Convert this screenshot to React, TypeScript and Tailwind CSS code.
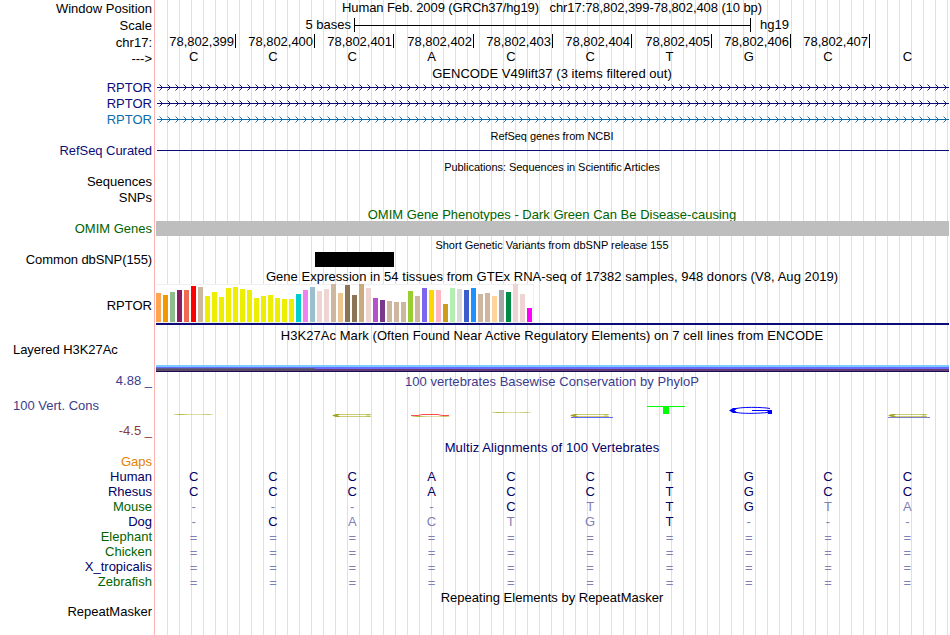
import React from "react";
import clsx from "clsx";

interface RowProps {
  height: number;
  label?: string;
  labelClass?: string;
  children?: React.ReactNode;
}

interface TitleProps {
  text: string;
  small?: boolean;
  className?: string;
}

const BASE_WIDTH = 79.3;
const SEQUENCE = "CCCACCTGCC";
const FIRST_POSITION = 78802399;

const SPECIES = [
  { name: "Human", color: "text-[#000064]", bases: "CCCACCTGCC" },
  { name: "Rhesus", color: "text-[#000064]", bases: "CCCACCTGCC" },
  { name: "Mouse", color: "text-[#006400]", bases: "----CtTGta" },
  { name: "Dog", color: "text-[#000064]", bases: "-CactgT---" },
  { name: "Elephant", color: "text-[#006400]", bases: "==========" },
  { name: "Chicken", color: "text-[#006400]", bases: "==========" },
  { name: "X_tropicalis", color: "text-[#000064]", bases: "==========" },
  { name: "Zebrafish", color: "text-[#006400]", bases: "==========" },
];

// [height, color] per tissue
const TISSUES: [number, string][] = [
  [29, "#ffa54f"],
  [27, "#ee9a00"],
  [30, "#8fbc8f"],
  [32, "#8b1c62"],
  [32, "#ee6a50"],
  [36, "#ff0000"],
  [35, "#cdb79e"],
  [26, "#eeee00"],
  [30, "#eeee00"],
  [25, "#eeee00"],
  [34, "#eeee00"],
  [35, "#eeee00"],
  [33, "#eeee00"],
  [32, "#eeee00"],
  [24, "#eeee00"],
  [26, "#eeee00"],
  [27, "#eeee00"],
  [24, "#eeee00"],
  [23, "#eeee00"],
  [23, "#eeee00"],
  [28, "#00cdcd"],
  [32, "#ee82ee"],
  [35, "#9ac0cd"],
  [31, "#eed5d2"],
  [33, "#eed5d2"],
  [38, "#cdb79e"],
  [29, "#eec591"],
  [37, "#8b7355"],
  [27, "#8b7355"],
  [38, "#cdaa7d"],
  [34, "#eed5d2"],
  [24, "#b452cd"],
  [22, "#7a378b"],
  [21, "#cdb79e"],
  [20, "#cdb79e"],
  [20, "#cdb79e"],
  [31, "#9acd32"],
  [26, "#cdb79e"],
  [34, "#7a67ee"],
  [32, "#ffd700"],
  [32, "#ffb6c1"],
  [18, "#cd9b1d"],
  [34, "#b4eeb4"],
  [33, "#d9d9d9"],
  [32, "#3a5fcd"],
  [34, "#1e90ff"],
  [28, "#cdb79e"],
  [29, "#cdb79e"],
  [26, "#ffd39b"],
  [32, "#a6a6a6"],
  [30, "#008b45"],
  [38, "#eed5d2"],
  [28, "#eed5d2"],
  [14, "#ff00ff"],
];

const Row = ({ height, label, labelClass, children }: RowProps) => (
  <div className="flex" style={{ height }}>
    <div
      className={clsx(
        "flex w-[152px] shrink-0 items-center justify-end whitespace-pre",
        labelClass
      )}
    >
      {label}
    </div>
    <div className="ml-[4px] h-full w-[793px]">{children}</div>
  </div>
);

const Title = ({ text, small, className }: TitleProps) => (
  <div
    className={clsx(
      "flex h-full items-center justify-center pr-px whitespace-pre",
      small && "text-[11px]",
      className
    )}
  >
    {text}
  </div>
);

const Bases = ({ bases, className }: { bases: string; className?: string }) => (
  <div className={clsx("-ml-[2px] grid h-full w-[793px] grid-cols-10", className)}>
    {bases.split("").map((base, i) => (
      <span
        key={i}
        className={clsx(
          "flex items-center justify-center",
          /[-=a-z]/.test(base) && "text-[#8080b4]",
          base === "=" && "pt-[2px]"
        )}
      >
        {base.toUpperCase()}
      </span>
    ))}
  </div>
);

const Positions = () => (
  <div className="ml-px flex h-[14px]">
    {SEQUENCE.slice(0, 9)
      .split("")
      .map((_, i) => {
        const width =
          Math.floor((i + 1) * BASE_WIDTH) - Math.floor(i * BASE_WIDTH);
        return (
          <div
            key={i}
            className="flex shrink-0 items-center justify-end border-r border-black pr-px tracking-[-0.03px]"
            style={{ width }}
          >
            {(FIRST_POSITION + i).toLocaleString("en-US")}
          </div>
        );
      })}
  </div>
);

const Transcript = ({ id, color }: { id: string; color: string }) => (
  <svg width="793" height="16" className="block">
    <defs>
      <pattern id={id} x="2" width="8" height="16" patternUnits="userSpaceOnUse">
        <path
          d="M1.5 4.5 L4.5 7.5 L1.5 10.5"
          fill="none"
          stroke={color}
          strokeWidth="0.95"
        />
      </pattern>
    </defs>
    <rect x="2" width="791" height="16" fill={`url(#${id})`} />
    <rect x="1" y="7" width="792" height="1" fill={color} />
  </svg>
);

const SquashedC = ({ x, y }: { x: number; y: number }) => (
  <g>
    <path
      d={`M${x + 39} ${y + 0.5} H${x + 6} L${x + 1} ${y + 1.5} L${x + 6} ${y + 2.5} H${x + 39}`}
      fill="none"
      stroke="#a0a000"
      strokeOpacity="0.6"
      strokeWidth="0.9"
    />
    <path
      d={`M${x} ${y + 1.5} l4 -1.5 h4 l-2 1.5 l2 1.5 h-4 z`}
      fill="#909000"
      fillOpacity="0.7"
    />
    <rect x={x + 34} y={y} width="4" height="3" fill="#a0a000" fillOpacity="0.3" />
  </g>
);

const ConservationLogo = () => (
  <svg width="793" height="49" viewBox="156 390 793 49" className="block">
    <defs>
      <linearGradient id="thin">
        <stop offset="0" stopColor="#a0a000" stopOpacity="0.3" />
        <stop offset="0.15" stopColor="#a0a000" stopOpacity="0.8" />
        <stop offset="0.4" stopColor="#a0a000" stopOpacity="0.35" />
        <stop offset="0.7" stopColor="#a0a000" stopOpacity="0.35" />
        <stop offset="0.88" stopColor="#a0a000" stopOpacity="0.6" />
        <stop offset="1" stopColor="#a0a000" stopOpacity="0.2" />
      </linearGradient>
    </defs>
    <rect x="174" y="414" width="39" height="1" fill="url(#thin)" />
    <SquashedC x={332} y={414} />
    <path
      d="M411 415.5 H418 L422 414.5 H438 L442 415.5 H449"
      fill="none"
      stroke="#ff2020"
      strokeOpacity="0.8"
    />
    <rect x="412" y="416" width="38" height="1" fill="url(#thin)" />
    <rect x="492" y="412" width="39" height="1" fill="url(#thin)" />
    <SquashedC x={570} y={414} />
    <rect x="571" y="417" width="42" height="1" fill="#0000ff" fillOpacity="0.6" />
    <path d="M647 406 H685 V407 H669 V414 H663 V407 H647 Z" fill="#00ff00" />
    <g fill="none" stroke="#0000ff">
      <path d="M770 408.5 C764 407.2 739 406.4 733 409.5 C729 413 746 414.4 768 412.5" />
      <path d="M752 410.5 H771" />
    </g>
    <path d="M729 410.5 L733 408 H738 L734.5 410.5 L738 413 H733 Z" fill="#0000ff" />
    <path d="M766 410 H772 V414 H768 V412 Z" fill="#0000ff" />
    <SquashedC x={888} y={414} />
    <rect x="888" y="417" width="42" height="1" fill="#0000a0" fillOpacity="0.5" />
  </svg>
);

export default function App() {
  return (
    <div className="relative h-[635px] w-[950px] overflow-hidden bg-white font-['Liberation_Sans',sans-serif] text-[13px] leading-none text-black">
      {/* guide lines behind every track */}
      <div className="absolute top-0 left-[154px] h-full w-px bg-[#ffb4b4]" />
      <div className="absolute top-0 left-[156px] h-full w-[793px] bg-[repeating-linear-gradient(to_right,transparent_0px,transparent_11px,#dcdcff_11px,#dcdcff_12px)]" />

      <div className="relative flex flex-col">
        <Row height={16} label="Window Position">
          <Title
            text="Human Feb. 2009 (GRCh37/hg19)   chr17:78,802,399-78,802,408 (10 bp)"
            className="pb-[2px] tracking-[-0.085px]"
          />
        </Row>
        <Row height={18} label="Scale">
          <div className="flex h-full items-center">
            <span className="w-[195px] pb-px text-right">5 bases</span>
            <div className="ml-[3px] flex h-[14px] w-[397px] items-center border-x border-black">
              <div className="h-px w-full bg-black" />
            </div>
            <span className="ml-[9px] pb-px">hg19</span>
          </div>
        </Row>
        <Row height={16} label="chr17:">
          <Positions />
        </Row>
        <Row height={16} label="--->">
          <Bases bases={SEQUENCE} className="pb-[3px]" />
        </Row>

        <Row height={14}>
          <Title
            text="GENCODE V49lift37 (3 items filtered out)"
            className="tracking-[0.03px]"
          />
        </Row>
        <Row height={16} label="RPTOR" labelClass="pb-[2px] text-[#0c0c78]">
          <Transcript id="transcript-1" color="#0c0c78" />
        </Row>
        <Row height={16} label="RPTOR" labelClass="pb-[2px] text-[#0c0c78]">
          <Transcript id="transcript-2" color="#0c0c78" />
        </Row>
        <Row height={16} label="RPTOR" labelClass="pb-[2px] text-[#0c6caa]">
          <Transcript id="transcript-3" color="#0c6caa" />
        </Row>

        <Row height={16}>
          <Title
            small
            text="RefSeq genes from NCBI"
            className="tracking-[-0.05px]"
          />
        </Row>
        <Row
          height={14}
          label="RefSeq Curated"
          labelClass="pb-[2px] tracking-[-0.05px] text-[#0c0c78]"
        >
          <div className="flex h-[13px] items-center pl-px">
            <div className="h-px w-full bg-[#0c0c78]" />
          </div>
        </Row>

        <Row height={17}>
          <Title
            small
            text="Publications: Sequences in Scientific Articles"
            className="pt-[2px] tracking-[-0.045px]"
          />
        </Row>
        <Row height={15} label="Sequences" labelClass="pb-[2px]" />
        <Row height={16} label="SNPs" labelClass="pb-[2px]" />

        <Row height={15}>
          <Title
            text="OMIM Gene Phenotypes - Dark Green Can Be Disease-causing"
            className="pt-[2px] text-[#006400]"
          />
        </Row>
        <Row height={15} label="OMIM Genes" labelClass="text-[#006400]">
          <div className="h-full bg-[#bebebe]" />
        </Row>

        <Row height={16}>
          <Title
            small
            text="Short Genetic Variants from dbSNP release 155"
            className="pt-[2px]"
          />
        </Row>
        <Row
          height={15}
          label="Common dbSNP(155)"
          labelClass="tracking-[-0.1px]"
        >
          <div className="ml-[159px] h-full w-[79px] bg-black" />
        </Row>

        <Row height={17}>
          <Title
            text="Gene Expression in 54 tissues from GTEx RNA-seq of 17382 samples, 948 donors (V8, Aug 2019)"
            className="pt-[2px] tracking-[0.055px]"
          />
        </Row>
        <Row height={41} label="RPTOR" labelClass="pt-[2px]">
          <div className="flex h-[39px] w-[378px] items-end gap-[2px] border-t border-r border-b border-[#f0f0f0] bg-white">
            {TISSUES.map(([height, color], i) => (
              <div
                key={i}
                className="w-[5px] shrink-0"
                style={{ height, backgroundColor: color }}
              />
            ))}
          </div>
          <div className="h-[2px] bg-[#0c0c78]" />
        </Row>

        <Row height={21}>
          <Title
            text="H3K27Ac Mark (Often Found Near Active Regulatory Elements) on 7 cell lines from ENCODE"
            className="tracking-[0.058px]"
          />
        </Row>
        <div className="flex h-[26px]">
          <span className="w-[156px] shrink-0 pl-[13px] leading-[7px] tracking-[-0.05px]">
            Layered H3K27Ac
          </span>
          <div className="mt-[19px] flex w-[793px] flex-col">
            <div className="h-[2px] bg-[#78ccff]" />
            <div className="h-px bg-[#6a6aff]" />
            <div className="flex h-px">
              <div className="w-[159px] bg-[#5c5c82]" />
              <div className="flex-1 bg-[#6a6aff]" />
            </div>
            <div className="flex h-[2px]">
              <div className="w-[159px] bg-[#5c4c6c]" />
              <div className="flex-1 bg-[#643c78]" />
            </div>
            <div className="h-px bg-[#1c0c50]" />
          </div>
        </div>

        <Row height={18} label="4.88 _" labelClass="pb-px text-[#3c3c8c]">
          <Title
            text="100 vertebrates Basewise Conservation by PhyloP"
            className="tracking-[0.04px] text-[#3c3c8c]"
          />
        </Row>
        <div className="flex h-[49px]">
          <div className="flex w-[152px] shrink-0 flex-col justify-between pt-[9px] pb-[2px]">
            <span className="pl-[13px] text-[#3c3c8c]">100 Vert. Cons</span>
            <span className="text-right text-[#8c3c3c]">-4.5 _</span>
          </div>
          <div className="ml-[4px]">
            <ConservationLogo />
          </div>
        </div>

        <Row height={16}>
          <Title
            text="Multiz Alignments of 100 Vertebrates"
            className="tracking-[0.1px] text-[#000064]"
          />
        </Row>
        <Row height={14} label="Gaps" labelClass="pb-[2px] text-[#e68200]" />
        {SPECIES.map(({ name, color, bases }) => (
          <Row key={name} height={15} label={name} labelClass={color}>
            <Bases bases={bases} className="text-[#000064]" />
          </Row>
        ))}

        <Row height={16}>
          <Title text="Repeating Elements by RepeatMasker" />
        </Row>
        <Row height={14} label="RepeatMasker" labelClass="pb-[2px]" />
      </div>
    </div>
  );
}
